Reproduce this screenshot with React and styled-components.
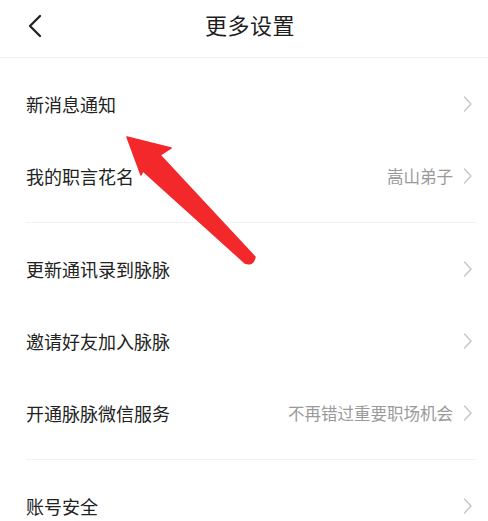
import React from 'react';
import styled, {createGlobalStyle} from 'styled-components';

//-----< Global >-----\\
const GlobalStyle = createGlobalStyle`
    body {
        margin: 0;
        background: #ffffff;
        font-family: "Noto Sans CJK SC", "Noto Sans", sans-serif;
    }
`;

//-----< Styling >-----\\
const Page = styled.div`
    position: relative;
    width: 488px;
    height: 521px;
    overflow: hidden;
    background: #ffffff;
`;

const Header = styled.header`
    height: 47px;
    padding-bottom: 10px;
    display: grid;
    grid-template-columns: 60px 1fr 48px;
    align-items: center;
    border-bottom: 1px solid #f1f1f1;
`;

const BackButton = styled.button`
    background: none;
    border: none;
    padding: 4px 0 0 27px;
    height: 100%;
    display: flex;
    align-items: center;
    cursor: pointer;
`;

const Title = styled.h1`
    margin: 0;
    text-align: center;
    font-size: 22px;
    font-weight: 400;
    color: #1e1e1e;
    letter-spacing: 0.5px;
`;

const Group = styled.section`
    margin: 0 12px 0 26px;
    padding: 10px 0;
    border-bottom: ${props => props.last ? 'none' : '1px solid #f2f2f2'};
`;

const Row = styled.div`
    height: 72px;
    display: flex;
    align-items: center;
    justify-content: space-between;
`;

const Label = styled.span`
    font-size: 18px;
    color: #222222;
`;

const Right = styled.div`
    display: flex;
    align-items: center;
    gap: 10px;
`;

const Value = styled.span`
    font-size: 16.5px;
    color: #9a9a9a;
`;

const Chevron = styled.svg`
    width: 9px;
    height: 18px;
    margin-right: 4px;
`;

const Annotation = styled.svg`
    position: absolute;
    left: 0;
    top: 0;
    pointer-events: none;
`;

const groups = [
    [
        {label: '新消息通知'},
        {label: '我的职言花名', value: '嵩山弟子'},
    ],
    [
        {label: '更新通讯录到脉脉'},
        {label: '邀请好友加入脉脉'},
        {label: '开通脉脉微信服务', value: '不再错过重要职场机会'},
    ],
    [
        {label: '账号安全'},
    ],
];

function RightChevron(){
    return (
        <Chevron viewBox="0 0 9 18">
            <path d="M1.5 2 L8 9 L1.5 16" fill="none" stroke="#c6c6c6" strokeWidth="1.4" strokeLinecap="round" strokeLinejoin="round" />
        </Chevron>
    );
}

//-----< Component Function >-----\\
export default function App(){
    return (
        <Page>
            <GlobalStyle />
            <Header>
                <BackButton aria-label="back">
                    <svg width="16" height="24" viewBox="0 0 16 24">
                        <path d="M13 2 L3 12 L13 22" fill="none" stroke="#222" strokeWidth="2.3" strokeLinecap="round" strokeLinejoin="round" />
                    </svg>
                </BackButton>
                <Title>更多设置</Title>
                <div />
            </Header>
            {groups.map((rows, gi) => (
                <Group key={gi} last={gi === groups.length - 1}>
                    {rows.map(row => (
                        <Row key={row.label}>
                            <Label>{row.label}</Label>
                            <Right>
                                {row.value && <Value>{row.value}</Value>}
                                <RightChevron />
                            </Right>
                        </Row>
                    ))}
                </Group>
            ))}
            {/* red arrow pointing at the first item */}
            <Annotation width="488" height="521" viewBox="0 0 488 521">
                <path
                    d="M127 137 L171 148 L160 155 L255 257 Q253 266 245 263 L143 171 L141 175 Z"
                    fill="#f2282a"
                    stroke="#f2282a"
                    strokeWidth="1.5"
                    strokeLinejoin="round"
                />
            </Annotation>
        </Page>
    );
}
